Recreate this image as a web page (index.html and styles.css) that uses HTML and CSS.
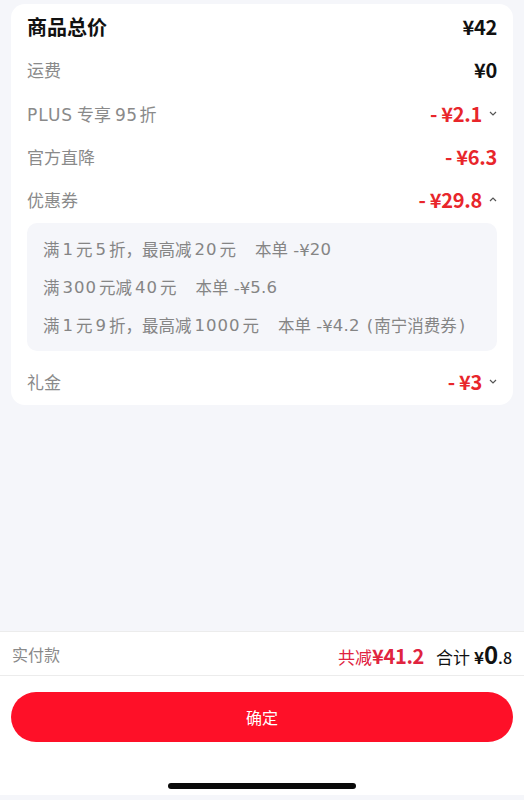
FILE: index.html
```html
<!DOCTYPE html>
<html lang="zh-CN">
<head>
<meta charset="utf-8">
<link rel="stylesheet" href="styles.css">
</head>
<body>
<div class="page">
  <div class="top">
    <div class="card">
      <div class="row">
        <span class="label strong">商品总价</span>
        <span class="amt black">¥42</span>
      </div>
      <div class="row">
        <span class="label">运费</span>
        <span class="amt black">¥0</span>
      </div>
      <div class="row">
        <span class="label"><span class="lat">PLUS</span> 专享<span class="n">95</span>折</span>
        <span class="amt red">- ¥2.1<svg class="chev" viewBox="0 0 8 5"><path d="M1 1 L4 4 L7 1" /></svg></span>
      </div>
      <div class="row">
        <span class="label">官方直降</span>
        <span class="amt red">- ¥6.3</span>
      </div>
      <div class="row">
        <span class="label">优惠券</span>
        <span class="amt red">- ¥29.8<svg class="chev" viewBox="0 0 8 5"><path d="M1 4 L4 1 L7 4" /></svg></span>
      </div>
      <div class="coupons">
        <div class="cline">满<span class="n">1</span>元<span class="n">5</span>折，最高减<span class="n">20</span>元<span class="gap"></span>本单 -¥<span class="r">20</span></div>
        <div class="cline">满<span class="n">300</span>元减<span class="n">40</span>元<span class="gap"></span>本单 -¥<span class="r">5.6</span></div>
        <div class="cline">满<span class="n">1</span>元<span class="n">9</span>折，最高减<span class="n">1000</span>元<span class="gap"></span>本单 -¥<span class="r">4.2</span><span class="pl">(</span>南宁消费券<span class="pr">)</span></div>
      </div>
      <div class="row">
        <span class="label">礼金</span>
        <span class="amt red">- ¥3<svg class="chev" viewBox="0 0 8 5"><path d="M1 1 L4 4 L7 1" /></svg></span>
      </div>
    </div>
  </div>
  <div class="summary">
    <span class="pay">实付款</span>
    <span class="totals">
      <span class="save">共减<b>¥41.2</b></span>
      <span class="sum">合计 <span class="yen">¥</span><span class="big">0</span><span class="dec">.8</span></span>
    </span>
  </div>
  <div class="footer">
    <button class="confirm">确定</button>
    <div class="home"></div>
  </div>
  <div class="bottom-strip"></div>
</div>
</body>
</html>
```

FILE: styles.css
```css
* { box-sizing: border-box; }
html, body { margin: 0; padding: 0; }
body {
  width: 524px;
  height: 800px;
  background: #f5f6fa;
  font-family: "Noto Sans CJK SC", "Noto Sans", sans-serif;
  color: #222;
  overflow: hidden;
}
.page {
  display: flex;
  flex-direction: column;
  height: 800px;
}
.top {
  flex: 1;
  padding: 4px 11px 0 11px;
}
.card {
  background: #fff;
  border-radius: 14px;
  padding: 1px 16px 2px 16px;
  display: flex;
  flex-direction: column;
}
.row {
  height: 43.3px;
  display: flex;
  align-items: center;
  justify-content: space-between;
}
.label {
  font-size: 17px;
  color: #8a8a8a;
}
.label.strong {
  font-size: 20px;
  font-weight: 700;
  color: #111;
}
.label .lat {
  font-family: "DejaVu Sans", "Noto Sans CJK SC", sans-serif;
  letter-spacing: 1px;
}
.label .n {
  font-family: "DejaVu Sans", "Noto Sans CJK SC", sans-serif;
  margin: 0 2px 0 4px;
  letter-spacing: 0.5px;
}
.amt {
  display: flex;
  align-items: center;
  font-size: 20px;
  font-weight: 700;
  letter-spacing: -0.3px;
}
.amt.black { color: #111; }
.amt.red { color: #e8262b; }
.chev {
  width: 8px;
  height: 5px;
  margin-left: 7px;
  fill: none;
  stroke: #555;
  stroke-width: 1.2;
}
.coupons {
  background: #f5f6fa;
  border-radius: 10px;
  margin: 2px 0 8px 0;
  padding: 7px 16px;
}
.cline {
  height: 38px;
  display: flex;
  align-items: center;
  font-size: 16.5px;
  color: #858585;
  white-space: nowrap;
  font-family: "DejaVu Sans", "Noto Sans CJK SC", sans-serif;
}
.cline .n {
  margin: 0 2px 0 3px;
  letter-spacing: 1px;
}
.cline .r {
  letter-spacing: 0.3px;
}
.cline .pl {
  margin: 0 1px 0 7px;
}
.cline .pr {
  margin: 0 0 0 2px;
}
.gap { display: inline-block; width: 19px; }
.summary {
  height: 45px;
  background: #fff;
  border-top: 1px solid #ececec;
  border-bottom: 1px solid #ececec;
  display: flex;
  align-items: center;
  justify-content: space-between;
  padding: 0 12px;
}
.pay {
  font-size: 16px;
  color: #8a8a8a;
}
.totals {
  display: flex;
  align-items: baseline;
}
.save {
  font-size: 17px;
  color: #e0243f;
}
.save b {
  font-size: 20px;
  font-weight: 700;
  letter-spacing: -0.3px;
}
.sum {
  margin-left: 12px;
  font-size: 17px;
  color: #111;
}
.sum .yen { font-size: 17px; font-weight: 700; }
.sum .big { font-size: 24px; font-weight: 700; }
.sum .dec { font-size: 16px; font-weight: 500; }
.footer {
  height: 119px;
  background: #fff;
  display: flex;
  flex-direction: column;
  align-items: center;
  padding: 16px 11px 0 11px;
}
.confirm {
  width: 100%;
  height: 50px;
  border: none;
  border-radius: 25px;
  background: #fe1028;
  color: #fff;
  font-family: "Noto Sans CJK SC", sans-serif;
  font-size: 16px;
}
.home {
  margin-top: 41px;
  width: 188px;
  height: 6px;
  border-radius: 3px;
  background: #0a0a0a;
}
.bottom-strip {
  height: 5px;
  background: #f5f6fa;
}
```
